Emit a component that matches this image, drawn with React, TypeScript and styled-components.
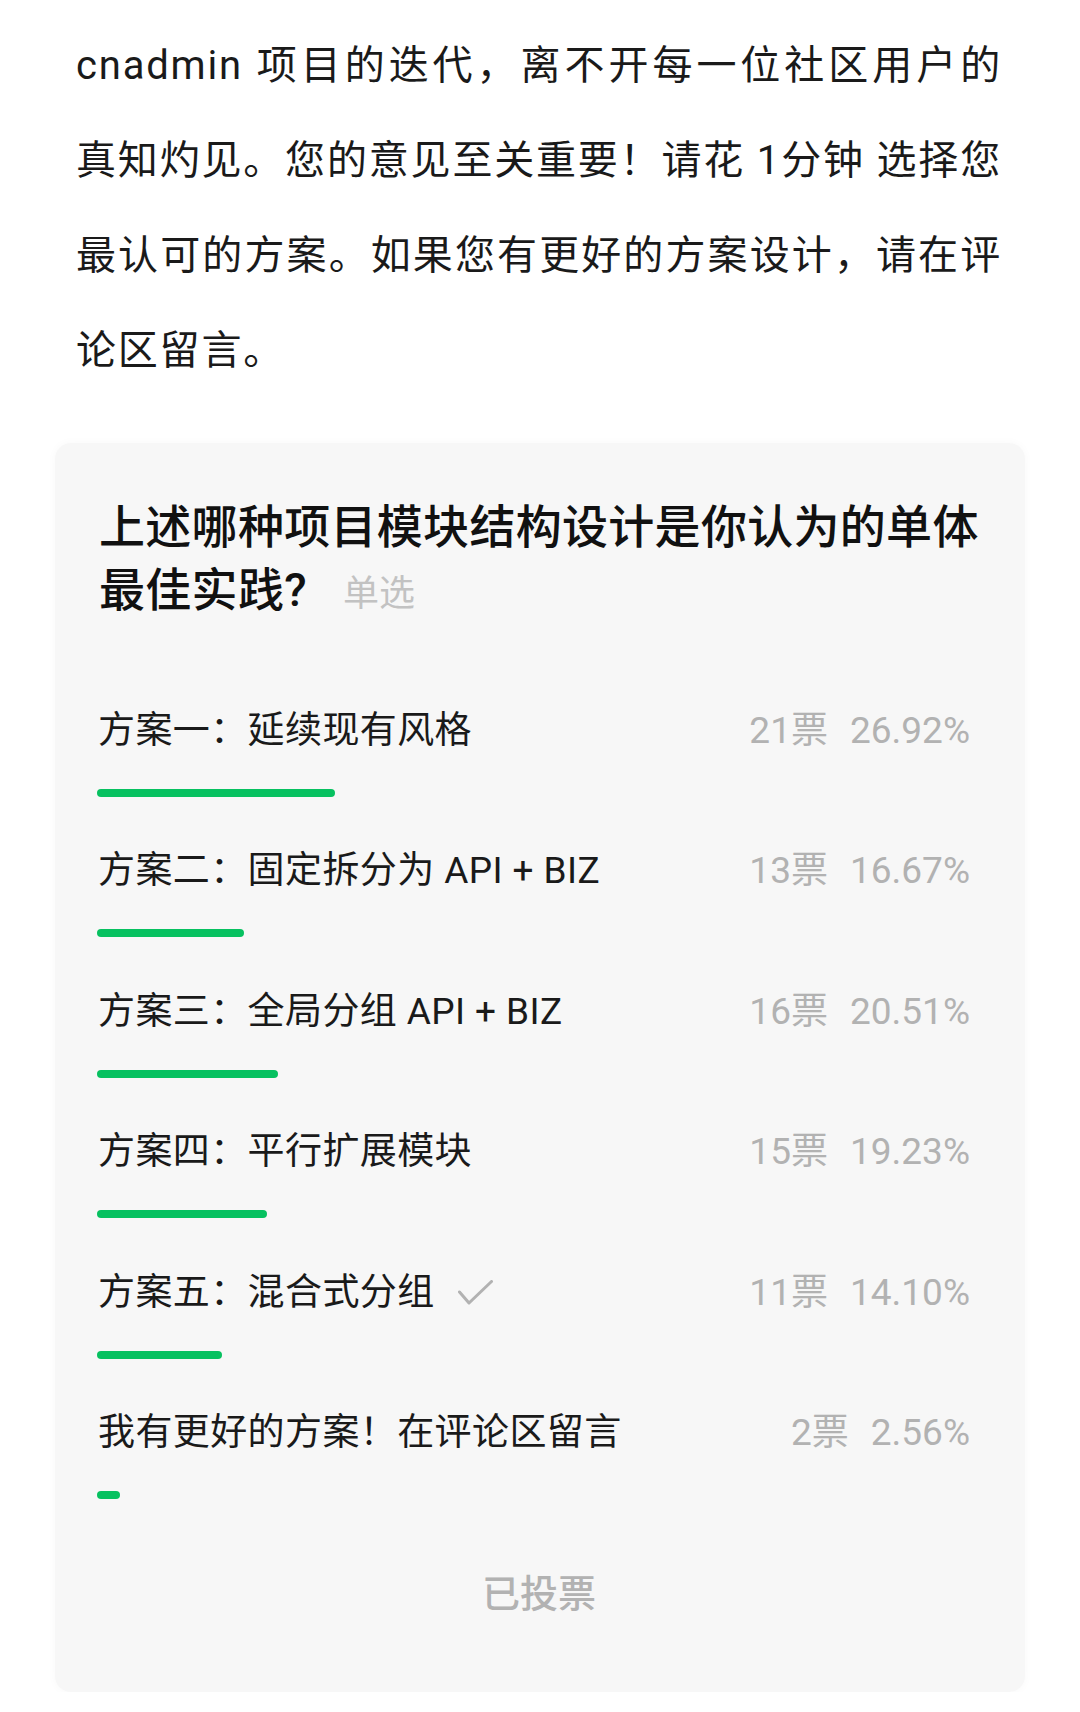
import styled, { createGlobalStyle } from 'styled-components';

const GlobalStyle = createGlobalStyle`
	html, body {
		margin: 0;
		padding: 0;
		background: #ffffff;
	}
	body {
		font-family: Roboto, 'Noto Sans CJK SC', sans-serif;
		color: #1a1a1a;
	}
`;

const Page = styled.div`
	width: 1080px;
	padding-top: 17.5px;
`;

const Intro = styled.p`
	margin: 0;
	padding: 0 78px 0 76px;
	font-size: 40px;
	line-height: 95px;
	letter-spacing: 1.8px;
	text-align: justify;
	color: #1a1a1a;
`;

const VoteCard = styled.section`
	margin: 45.5px 55px 0;
	padding: 52.5px 44px 71.5px 42px;
	background: #f7f7f7;
	border-radius: 16px;
	box-shadow: 0 0 10px rgba(0, 0, 0, 0.03);
`;

const Question = styled.h2`
	margin: 0 0 0 2px;
	font-size: 46px;
	line-height: 63px;
	letter-spacing: 0.3px;
	font-weight: 500;
	color: #111111;
`;

const Mode = styled.span`
	margin-left: 36px;
	font-size: 36px;
	letter-spacing: 0;
	font-weight: 400;
	color: #c2c2c2;
`;

const OptionList = styled.div`
	display: flex;
	flex-direction: column;
	gap: 48.4px;
	margin-top: 79.5px;
`;

const Option = styled.div`
	display: flex;
	flex-direction: column;
	gap: 32px;
`;

const OptionHead = styled.div`
	display: flex;
	align-items: center;
	justify-content: space-between;
	height: 52px;
	line-height: 52px;
	padding: 0 11px 0 1px;
`;

const OptionLabel = styled.span`
	display: flex;
	align-items: center;
	font-size: 37px;
	letter-spacing: 0.4px;
	color: #1a1a1a;
`;

const Chosen = styled.svg`
	margin-left: 23px;
	width: 35px;
	height: 25px;
`;

const Stats = styled.span`
	display: flex;
	align-items: baseline;
	gap: 22px;
	font-size: 37px;
	color: #b2b2b2;
`;

const Track = styled.div`
	height: 8px;
`;

const Bar = styled.div`
	height: 8px;
	border-radius: 4px;
	background: #07c160;
`;

const Voted = styled.div`
	margin-top: 69.5px;
	text-align: center;
	font-size: 38px;
	line-height: 52px;
	font-weight: 500;
	color: #b2b2b2;
`;

type Choice = {
	label: string;
	votes: number;
	pct: number;
	mine?: boolean;
};

const choices: Choice[] = [
	{ label: '方案一：延续现有风格', votes: 21, pct: 26.92 },
	{ label: '方案二：固定拆分为 API + BIZ', votes: 13, pct: 16.67 },
	{ label: '方案三：全局分组 API + BIZ', votes: 16, pct: 20.51 },
	{ label: '方案四：平行扩展模块', votes: 15, pct: 19.23 },
	{ label: '方案五：混合式分组', votes: 11, pct: 14.1, mine: true },
	{ label: '我有更好的方案！在评论区留言', votes: 2, pct: 2.56 },
];

const App = () => {
	return (
		<Page>
			<GlobalStyle />
			<Intro>
				cnadmin 项目的迭代，离不开每一位社区用户的真知灼见。您的意见至关重要！请花 1分钟 选择您最认可的方案。如果您有更好的方案设计，请在评论区留言。
			</Intro>
			<VoteCard>
				<Question>
					上述哪种项目模块结构设计是你认为的单体最佳实践?
					<Mode>单选</Mode>
				</Question>
				<OptionList>
					{choices.map((c, idx) => (
						<Option key={idx}>
							<OptionHead>
								<OptionLabel>
									{c.label}
									{c.mine && (
										<Chosen viewBox="0 0 35 25" fill="none">
											<polyline
												points="1.5,12 11,23 33.5,1.5"
												stroke="#b2b2b2"
												strokeWidth="3"
												strokeLinecap="round"
												strokeLinejoin="round"
											/>
										</Chosen>
									)}
								</OptionLabel>
								<Stats>
									<span>{c.votes}票</span>
									<span>{c.pct.toFixed(2)}%</span>
								</Stats>
							</OptionHead>
							<Track>
								<Bar style={{ width: `${c.pct}%` }} />
							</Track>
						</Option>
					))}
				</OptionList>
				<Voted>已投票</Voted>
			</VoteCard>
		</Page>
	);
};

export default App;
